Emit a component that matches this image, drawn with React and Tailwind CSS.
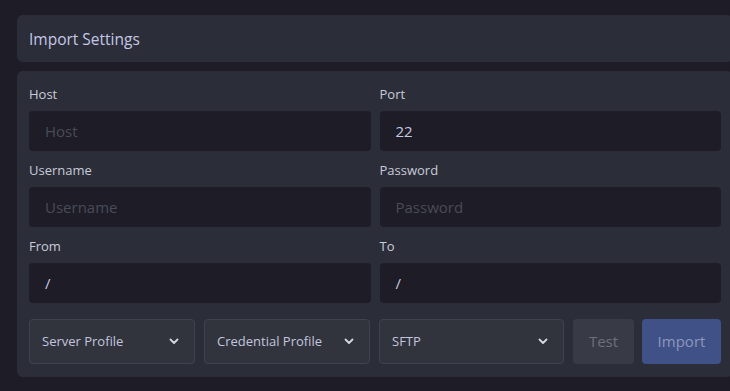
import React from "react";

const font = { fontFamily: '"Open Sans", "Noto Sans", sans-serif' };

function Chevron() {
  return (
    <svg width="10" height="7" viewBox="0 0 10 7" fill="none" className="shrink-0">
      <path d="M1.5 1.5 L5 5 L8.5 1.5" stroke="#d4d6e2" strokeWidth="1.8" strokeLinecap="round" strokeLinejoin="round" />
    </svg>
  );
}

function Field({ label, placeholder, value }) {
  return (
    <div className="flex flex-col">
      <label className="text-[13px] leading-[20px] text-[#c9cbd8] mb-[7px]">{label}</label>
      <div className="h-[40px] rounded-[4px] bg-[#1d1c27] flex items-center px-[16px] text-[15px]">
        {value ? (
          <span className="text-[#c7c9e0]">{value}</span>
        ) : (
          <span className="text-[#4a4b57]">{placeholder}</span>
        )}
      </div>
    </div>
  );
}

function Select({ label, w }) {
  return (
    <div className={`${w} h-[45px] rounded-[4px] border border-[#40424d] bg-[#31333d] flex items-center justify-between pl-[12px] pr-[15px] text-[13px] text-[#c3c6de]`}>
      <span>{label}</span>
      <Chevron />
    </div>
  );
}

export default function App() {
  return (
    <div className="w-[730px] h-[391px] overflow-hidden bg-[#1e1c27]" style={font}>
      <div className="pl-[17px] pt-[15px] w-[750px]">
        <div className="w-[716px] h-[47px] rounded-[6px] bg-[#2b2e38] flex items-center pl-[12px] pt-[2px] text-[15.5px] text-[#c5c7e6]">
          Import Settings
        </div>
        <div className="mt-[9px] w-[716px] rounded-[6px] bg-[#2b2e38] pl-[12px] pr-[12px] pt-[13px] pb-[13px]">
          <div className="grid grid-cols-2 gap-x-[9px] gap-y-[9px]">
            <Field label="Host" placeholder="Host" />
            <Field label="Port" value="22" />
            <Field label="Username" placeholder="Username" />
            <Field label="Password" placeholder="Password" />
            <Field label="From" value="/" />
            <Field label="To" value="/" />
          </div>
          <div className="flex mt-[16px]">
            <Select label="Server Profile" w="w-[166px]" />
            <div className="w-[9px]" />
            <Select label="Credential Profile" w="w-[166px]" />
            <div className="w-[9px]" />
            <Select label="SFTP" w="w-[185px]" />
            <div className="w-[9px]" />
            <div className="w-[61px] h-[45px] rounded-[4px] bg-[#383b46] flex items-center justify-center text-[15px] text-[#6c6f7c]">
              Test
            </div>
            <div className="w-[8px]" />
            <div className="w-[79px] h-[45px] rounded-[4px] bg-[#3f5186] flex items-center justify-center text-[15px] text-[#8d96bd]">
              Import
            </div>
          </div>
        </div>
      </div>
    </div>
  );
}
